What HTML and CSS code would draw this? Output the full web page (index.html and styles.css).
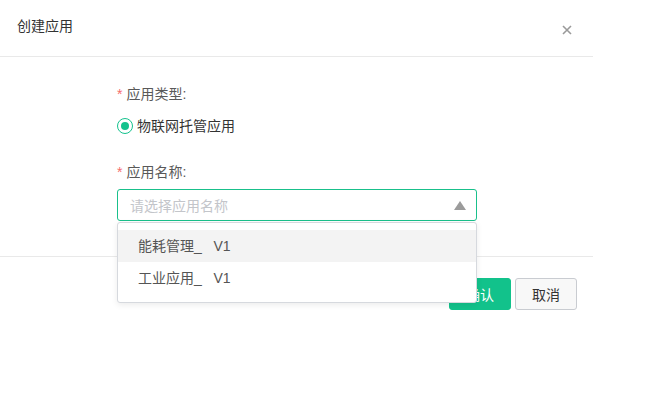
FILE: index.html
```html
<!DOCTYPE html>
<html lang="zh">
<head>
<meta charset="utf-8">
<title>创建应用</title>
<link rel="stylesheet" href="styles.css">
</head>
<body>
<div class="dialog">
  <div class="dlg-header">
    <span class="title">创建应用</span>
    <svg class="close" width="10" height="10" viewBox="0 0 10 10"><path d="M1 1L9 9M9 1L1 9" stroke="#9a9a9a" stroke-width="1.6" fill="none"/></svg>
  </div>
  <div class="dlg-body">
    <div class="label"><span class="req">*</span>应用类型:</div>
    <div class="radio-row">
      <span class="radio"><span class="dot"></span></span>
      <span class="radio-text">物联网托管应用</span>
    </div>
    <div class="label label2"><span class="req">*</span>应用名称:</div>
    <div class="select-wrap">
      <div class="select">
        <span class="placeholder">请选择应用名称</span>
        <span class="arrow"></span>
      </div>
      <div class="dropdown">
        <div class="item hover">能耗管理_   V1</div>
        <div class="item">工业应用_   V1</div>
      </div>
    </div>
  </div>
  <div class="dlg-footer">
    <button class="btn btn-primary">确认</button>
    <button class="btn btn-default">取消</button>
  </div>
</div>
</body>
</html>
```

FILE: styles.css
```css
html, body {
  margin: 0;
  padding: 0;
  background: #ffffff;
}
body {
  font-family: "Liberation Sans", "Noto Sans CJK SC", sans-serif;
  color: #333;
}
.dialog {
  width: 593px;
  background: #fff;
}
.dlg-header {
  height: 56px;
  border-bottom: 1px solid #e9e9e9;
  display: flex;
  justify-content: space-between;
  align-items: flex-start;
  padding: 0 21px 0 17px;
}
.title {
  font-size: 14px;
  line-height: 20px;
  margin-top: 16px;
  color: #333;
}
.close {
  margin-top: 25px;
  display: block;
}
.dlg-body {
  padding: 27px 0 35px 117px;
  height: 199px;
  box-sizing: border-box;
}
.label {
  font-size: 14px;
  line-height: 20px;
  color: #595959;
}
.req {
  color: #f56c6c;
  margin-right: 4px;
}
.radio-row {
  margin-top: 12px;
  display: flex;
  align-items: center;
  height: 20px;
}
.radio {
  width: 16px;
  height: 16px;
  box-sizing: border-box;
  border: 1.5px solid #14c28d;
  border-radius: 50%;
  display: flex;
  align-items: center;
  justify-content: center;
}
.dot {
  width: 8px;
  height: 8px;
  border-radius: 50%;
  background: #14c28d;
}
.radio-text {
  margin-left: 4px;
  font-size: 14px;
  line-height: 20px;
  color: #333;
}
.label2 {
  margin-top: 26px;
}
.select-wrap {
  position: relative;
  width: 360px;
  margin-top: 7px;
}
.select {
  height: 32px;
  box-sizing: border-box;
  border: 1px solid #19c08b;
  border-radius: 3px;
  display: flex;
  align-items: center;
  justify-content: space-between;
  padding: 0 10px 0 12px;
}
.placeholder {
  font-size: 14px;
  color: #c3c5ca;
}
.arrow {
  width: 0;
  height: 0;
  border-left: 6.5px solid transparent;
  border-right: 6.5px solid transparent;
  border-bottom: 9px solid #9b9b9b;
  margin-top: 1px;
}
.dropdown {
  position: absolute;
  top: 33px;
  left: 0;
  width: 360px;
  box-sizing: border-box;
  background: #fff;
  border: 1px solid #d6d9de;
  border-radius: 3px;
  box-shadow: 0 2px 6px rgba(0, 0, 0, 0.08);
  padding: 7px 0 8px;
  z-index: 10;
}
.item {
  height: 32px;
  line-height: 32px;
  padding-left: 20px;
  font-size: 14px;
  color: #555;
  white-space: pre;
}
.item.hover {
  background: #f3f3f3;
}
.dlg-footer {
  border-top: 1px solid #e9e9e9;
  display: flex;
  justify-content: flex-end;
  gap: 4px;
  padding: 21px 16px 20px 0;
}
.btn {
  width: 62px;
  height: 32px;
  box-sizing: border-box;
  border-radius: 3px;
  font-family: "Liberation Sans", "Noto Sans CJK SC", sans-serif;
  font-size: 14px;
  padding: 0;
  cursor: pointer;
}
.btn-primary {
  background: #12c28b;
  border: 1px solid #12c28b;
  color: #fff;
}
.btn-default {
  background: #f8f8f8;
  border: 1px solid #c9ccd1;
  color: #333;
}
```
